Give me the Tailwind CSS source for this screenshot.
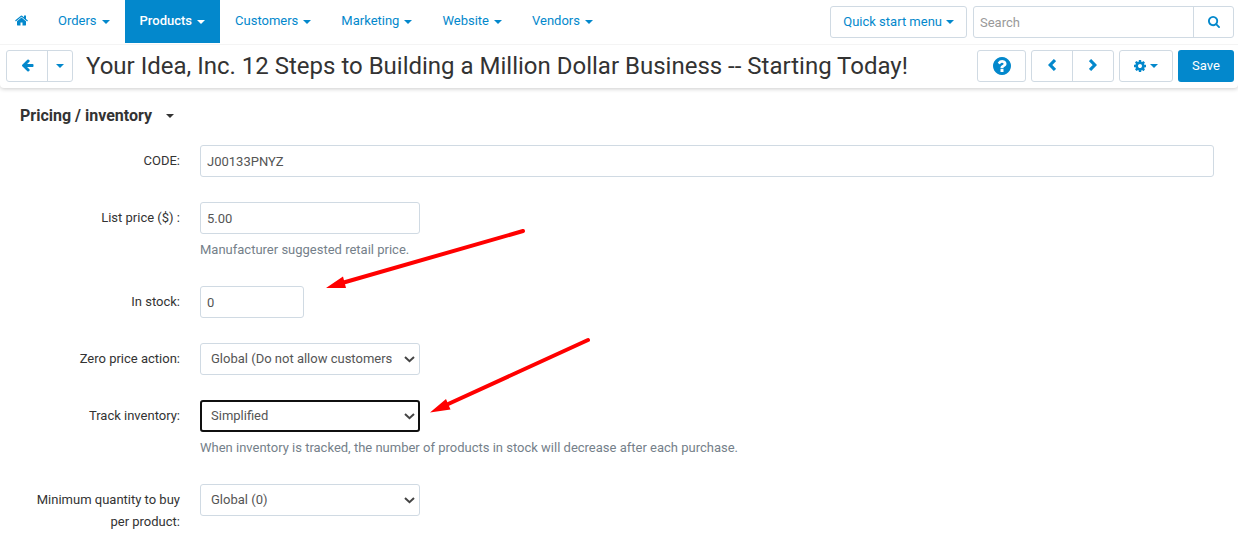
<!DOCTYPE html>
<html lang="en">
<head>
    <meta charset="UTF-8">
    <meta name="viewport" content="width=device-width, initial-scale=1.0">
    <title>Edit product</title>
    <script src="https://cdn.jsdelivr.net/npm/@tailwindcss/browser@4"></script>
</head>
<body class="relative bg-white font-[Roboto,sans-serif] text-[13px] text-[#333]">
    <header class="rounded-b-sm shadow-[0_1px_4px_rgba(0,0,0,0.2)]">
        <!-- Main menu -->
        <div class="flex h-11 items-start text-[#0388cc]">
            <nav class="flex h-[43px] leading-10">
                <a href="#" aria-label="Home" class="flex items-center px-[15px] pb-[3px]">
                    <svg class="size-[13px]" viewBox="64 64 1664 1664" fill="currentColor"><path d="M1472 992v480q0 26-19 45t-45 19h-384v-384h-256v384h-384q-26 0-45-19t-19-45v-480q0-1 .5-3t.5-3l575-474 575 474q1 2 1 6zm223-69l-62 74q-8 9-21 11h-3q-13 0-21-7l-692-577-692 577q-12 8-24 7-13-2-21-11l-62-74q-8-10-7-23.5t11-21.5l719-599q32-26 76-26t76 26l244 204v-195q0-14 9-23t23-9h192q14 0 23 9t9 23v408l219 182q10 8 11 21.5t-7 23.5z"/></svg>
                </a>
                <a href="#" class="flex items-center gap-[5px] px-[15px] pb-0.5">Orders <span class="mt-0.5 border-x-4 border-t-4 border-x-transparent"></span></a>
                <a href="#" class="flex items-center gap-[5px] bg-[#0388cc] px-[15px] pb-0.5 font-medium text-white">Products <span class="mt-0.5 border-x-4 border-t-4 border-x-transparent"></span></a>
                <a href="#" class="flex items-center gap-[5px] px-[15px] pb-0.5">Customers <span class="mt-0.5 border-x-4 border-t-4 border-x-transparent"></span></a>
                <a href="#" class="flex items-center gap-[5px] px-[15px] pb-0.5">Marketing <span class="mt-0.5 border-x-4 border-t-4 border-x-transparent"></span></a>
                <a href="#" class="flex items-center gap-[5px] px-[15px] pb-0.5">Website <span class="mt-0.5 border-x-4 border-t-4 border-x-transparent"></span></a>
                <a href="#" class="flex items-center gap-[5px] px-[15px] pb-0.5">Vendors <span class="mt-0.5 border-x-4 border-t-4 border-x-transparent"></span></a>
            </nav>
            <div class="ml-auto flex gap-1.5 pt-1.5 pr-1">
                <button type="button" class="flex h-8 items-center gap-1 rounded-[3px] border border-[#d0dae3] px-3">Quick start menu <span class="border-x-4 border-t-4 border-x-transparent"></span></button>
                <form class="flex h-8 w-[261px] rounded-[3px] border border-[#d0dae3]">
                    <input type="text" aria-label="Search" placeholder="Search" class="min-w-0 flex-1 px-1.5 pt-0.5 text-[#555] outline-none placeholder:text-[#999]">
                    <button type="button" aria-label="Find" class="flex w-10 items-center justify-center border-l border-[#d0dae3]">
                        <svg class="size-3" viewBox="64 128 1664 1664" fill="currentColor"><path d="M1216 832q0-185-131.5-316.5t-316.5-131.5-316.5 131.5-131.5 316.5 131.5 316.5 316.5 131.5 316.5-131.5 131.5-316.5zm512 832q0 52-38 90t-90 38q-54 0-90-38l-343-342q-179 124-399 124-143 0-273.5-55.5t-225-150-150-225-55.5-273.5 55.5-273.5 150-225 225-150 273.5-55.5 273.5 55.5 225 150 150 225 55.5 273.5q0 220-124 399l343 343q37 37 37 90z"/></svg>
                    </button>
                </form>
            </div>
        </div>

        <!-- Title and actions -->
        <div class="flex items-center border-t border-[#f4f4f4] pt-[5px] pr-1 pb-1.5 pl-1.5 text-[#0388cc]">
            <div class="flex h-8 rounded-[3px] border border-[#d0dae3]">
                <a href="#" aria-label="Back" class="flex w-10 items-center justify-center pb-0.5">
                    <svg class="size-[13px]" viewBox="64 128 1664 1664" fill="currentColor"><path d="M1664 896v128q0 53-32.5 90.5t-84.5 37.5h-704l293 294q38 36 38 90t-38 90l-75 76q-37 37-90 37-52 0-91-37l-651-652q-37-37-37-90 0-52 37-91l651-650q38-38 91-38 52 0 90 38l75 74q38 38 38 91t-38 91l-293 293h704q52 0 84.5 37.5t32.5 90.5z"/></svg>
                </a>
                <button type="button" aria-label="Recent" class="flex w-[25px] items-center justify-center border-l border-[#d0dae3]"><span class="border-x-4 border-t-4 border-x-transparent"></span></button>
            </div>
            <h1 class="ml-[13px] flex-1 truncate text-2xl leading-8 text-[#333]">Your Idea, Inc. 12 Steps to Building a Million Dollar Business -- Starting Today!</h1>
            <div class="flex gap-[5px]">
                <button type="button" aria-label="Help" class="flex h-8 w-[49px] items-center justify-center rounded-[3px] border border-[#d0dae3]">
                    <svg class="size-[18px]" viewBox="128 128 1536 1536" fill="currentColor"><path d="M1024 1376v-192q0-14-9-23t-23-9h-192q-14 0-23 9t-9 23v192q0 14 9 23t23 9h192q14 0 23-9t9-23zm256-672q0-88-55.5-163t-138.5-116-170-41q-243 0-371 213-15 24 8 42l132 100q7 6 19 6 16 0 25-12 53-68 86-92 34-24 86-24 48 0 85.5 26t37.5 59q0 38-20 61t-68 45q-63 28-115.5 86.5t-52.5 125.5v36q0 14 9 23t23 9h192q14 0 23-9t9-23q0-19 21.5-49.5t54.5-49.5q32-18 49-28.5t46-35 44.5-48 28-60.5 12.5-81zm384 192q0 209-103 385.5t-279.5 279.5-385.5 103-385.5-103-279.5-279.5-103-385.5 103-385.5 279.5-279.5 385.5-103 385.5 103 279.5 279.5 103 385.5z"/></svg>
                </button>
                <div class="flex h-8 rounded-[3px] border border-[#d0dae3]">
                    <a href="#" aria-label="Previous" class="flex w-10 items-center justify-center pb-0.5">
                        <svg class="h-3 w-2" viewBox="0 0 8 12" fill="none" stroke="currentColor" stroke-width="3.2"><path d="M7 1.100 2.200 6 7 10.900"/></svg>
                    </a>
                    <a href="#" aria-label="Next" class="flex w-[41px] items-center justify-center border-l border-[#d0dae3] pb-0.5">
                        <svg class="h-3 w-2" viewBox="0 0 8 12" fill="none" stroke="currentColor" stroke-width="3.2"><path d="M1 1.100 5.800 6 1 10.900"/></svg>
                    </a>
                </div>
                <button type="button" aria-label="Settings" class="flex h-8 w-[54px] items-center justify-center gap-1 rounded-[3px] border border-[#d0dae3]">
                    <svg class="size-3" viewBox="128 128 1536 1536" fill="currentColor"><path d="M1152 896q0-106-75-181t-181-75-181 75-75 181 75 181 181 75 181-75 75-181zm512-109v222q0 12-8 23t-20 13l-185 28q-19 54-39 91 35 50 107 138 10 12 10 25t-9 23q-27 37-99 108t-94 71q-12 0-26-9l-138-108q-44 23-91 38-16 136-29 186-7 28-36 28h-222q-14 0-24.5-8.5t-11.5-21.5l-28-184q-49-16-90-37l-141 107q-10 9-25 9-14 0-25-11-126-114-165-168-7-10-7-23 0-12 8-23 15-21 51-66.5t54-70.5q-27-50-41-99l-183-27q-13-2-21-12.5t-8-23.5v-222q0-12 8-23t19-13l186-28q14-46 39-92-40-57-107-138-10-12-10-24 0-10 9-23 26-36 98.5-107.5t94.5-71.5q13 0 26 10l138 107q44-23 91-38 16-136 29-186 7-28 36-28h222q14 0 24.5 8.5t11.5 21.5l28 184q49 16 90 37l142-107q9-9 24-9 13 0 25 10 129 119 165 170 7 8 7 22 0 12-8 23-15 21-51 66.5t-54 70.5q26 50 41 98l183 28q13 2 21 12.5t8 23.5z"/></svg>
                    <span class="border-x-4 border-t-4 border-x-transparent"></span>
                </button>
                <button type="submit" form="product" class="h-8 w-14 rounded-[3px] bg-[#0388cc] text-white">Save</button>
            </div>
        </div>
    </header>

    <main class="pt-4 pr-6 pl-5">
        <h2 class="mb-[17px] flex items-center gap-3.5 text-base leading-6 font-bold">Pricing / inventory <span class="border-x-4 border-t-4 border-x-transparent"></span></h2>

        <form id="product" class="space-y-[25px]">
            <div class="flex gap-5">
                <label for="code" class="w-40 shrink-0 pt-[5px] text-right leading-[22px]">CODE:</label>
                <input type="text" id="code" value="J00133PNYZ" class="h-8 min-w-0 flex-1 rounded-[3px] border border-[#d0dae3] px-1.5 text-[#555]">
            </div>

            <div class="flex gap-5">
                <label for="price" class="w-40 shrink-0 pt-[5px] text-right leading-[22px]">List price ($) :</label>
                <div>
                    <input type="text" id="price" value="5.00" class="block h-8 w-[220px] rounded-[3px] border border-[#d0dae3] px-1.5 text-[#555]">
                    <p class="mt-1.5 pb-px leading-5 text-[#757f8a]">Manufacturer suggested retail price.</p>
                </div>
            </div>

            <div class="flex gap-5">
                <label for="stock" class="w-40 shrink-0 pt-[5px] text-right leading-[22px]">In stock:</label>
                <input type="text" id="stock" value="0" class="h-8 w-[104px] rounded-[3px] border border-[#d0dae3] px-1.5 text-[#555]">
            </div>

            <div class="flex gap-5">
                <label for="zero" class="w-40 shrink-0 pt-[5px] text-right leading-[22px]">Zero price action:</label>
                <div class="relative">
                    <select id="zero" class="block h-8 w-[220px] appearance-none rounded-[3px] border border-[#d0dae3] bg-white pr-[27px] pl-2.5 text-[#555]">
                        <option>Global (Do not allow customers to add the product to cart)</option>
                    </select>
                    <svg class="pointer-events-none absolute top-[13px] right-[5px] h-[7px] w-[11px]" viewBox="0 0 11 7" fill="none" stroke="#444" stroke-width="2"><path d="m1 1 4.500 4.200L10 1"/></svg>
                </div>
            </div>

            <div class="flex gap-5">
                <label for="track" class="w-40 shrink-0 pt-[5px] text-right leading-[22px]">Track inventory:</label>
                <div>
                    <div class="relative w-[220px]">
                        <select id="track" class="block h-8 w-full appearance-none rounded-[3px] border-2 border-[#101010] bg-white pr-[27px] pl-[9px] text-[#555]">
                            <option>Simplified</option>
                        </select>
                        <svg class="pointer-events-none absolute top-[13px] right-[5px] h-[7px] w-[11px]" viewBox="0 0 11 7" fill="none" stroke="#444" stroke-width="2"><path d="m1 1 4.500 4.200L10 1"/></svg>
                    </div>
                    <p class="mt-1.5 pb-px leading-5 text-[#757f8a]">When inventory is tracked, the number of products in stock will decrease after each purchase.</p>
                </div>
            </div>

            <div class="flex gap-5">
                <label for="minimum" class="w-40 shrink-0 pt-[5px] text-right leading-[22px]">Minimum quantity to buy per product:</label>
                <div class="relative">
                    <select id="minimum" class="block h-8 w-[220px] appearance-none rounded-[3px] border border-[#d0dae3] bg-white pr-[27px] pl-2.5 text-[#555]">
                        <option>Global (0)</option>
                    </select>
                    <svg class="pointer-events-none absolute top-[13px] right-[5px] h-[7px] w-[11px]" viewBox="0 0 11 7" fill="none" stroke="#444" stroke-width="2"><path d="m1 1 4.500 4.200L10 1"/></svg>
                </div>
            </div>
        </form>
    </main>

    <!-- Arrows pointing at the stock and tracking fields -->
    <svg class="pointer-events-none absolute top-[220px] left-[320px] h-[200px] w-[280px]" viewBox="320 220 280 200" fill="#f00" stroke="#f00" stroke-linecap="round" aria-hidden="true">
        <path d="M523 231 342 283M588 340 446 405" stroke-width="4"/>
        <path d="m326 288 17-11.500 3 11.500zM430 412.500l16-13.500 4.500 10.500z" stroke="none"/>
    </svg>
</body>
</html>
